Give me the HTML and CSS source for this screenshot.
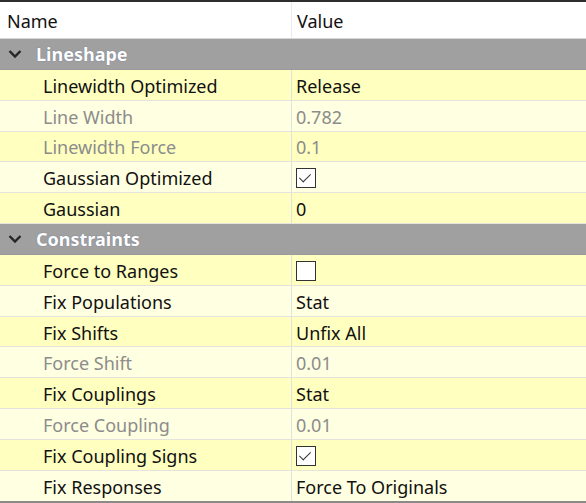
FILE: index.html
```html
<!DOCTYPE html>
<html lang="en">
<head>
  <meta charset="UTF-8">
  <title>Properties</title>
  <link rel="stylesheet" href="styles.css">
</head>
<body>

  <div class="grid">
    <!-- Column headers -->
    <div class="row header">
      <div class="cell name">Name</div>
      <div class="cell value">Value</div>
    </div>

    <!-- Lineshape -->
    <div class="row group">
      <span class="chev"><svg width="14" height="10" viewBox="0 0 14 10"><path d="M1.5 2 L7 7.5 L12.5 2" fill="none" stroke="#262626" stroke-width="2.4"/></svg></span>
      <span>Lineshape</span>
    </div>
    <div class="row dark">
      <div class="cell name">Linewidth Optimized</div>
      <div class="cell value">Release</div>
    </div>
    <div class="row light off">
      <div class="cell name">Line Width</div>
      <div class="cell value">0.782</div>
    </div>
    <div class="row dark off">
      <div class="cell name">Linewidth Force</div>
      <div class="cell value">0.1</div>
    </div>
    <div class="row light">
      <div class="cell name">Gaussian Optimized</div>
      <div class="cell value"><span class="check on"></span></div>
    </div>
    <div class="row dark">
      <div class="cell name">Gaussian</div>
      <div class="cell value">0</div>
    </div>

    <!-- Constraints -->
    <div class="row group">
      <span class="chev"><svg width="14" height="10" viewBox="0 0 14 10"><path d="M1.5 2 L7 7.5 L12.5 2" fill="none" stroke="#262626" stroke-width="2.4"/></svg></span>
      <span>Constraints</span>
    </div>
    <div class="row dark">
      <div class="cell name">Force to Ranges</div>
      <div class="cell value"><span class="check"></span></div>
    </div>
    <div class="row light">
      <div class="cell name">Fix Populations</div>
      <div class="cell value">Stat</div>
    </div>
    <div class="row dark">
      <div class="cell name">Fix Shifts</div>
      <div class="cell value">Unfix All</div>
    </div>
    <div class="row light off">
      <div class="cell name">Force Shift</div>
      <div class="cell value">0.01</div>
    </div>
    <div class="row dark">
      <div class="cell name">Fix Couplings</div>
      <div class="cell value">Stat</div>
    </div>
    <div class="row light off">
      <div class="cell name">Force Coupling</div>
      <div class="cell value">0.01</div>
    </div>
    <div class="row dark">
      <div class="cell name">Fix Coupling Signs</div>
      <div class="cell value"><span class="check on"></span></div>
    </div>
    <div class="row light">
      <div class="cell name">Fix Responses</div>
      <div class="cell value">Force To Originals</div>
    </div>
  </div>

</body>
</html>
```

FILE: styles.css
```css
* {
  margin: 0;
  padding: 0;
  box-sizing: border-box;
}

body {
  font-family: "Noto Sans", "Open Sans", sans-serif;
  font-size: 18px;
  color: #111;
  background: #fff;
  width: 586px;
  height: 503px;
  overflow: hidden;
}

.grid {
  border-top: 2px solid #2e2e2e;
  border-bottom: 2px solid #8a8a8a;
  height: 503px;
  display: flex;
  flex-direction: column;
  overflow: hidden;
}

.row {
  display: flex;
  align-items: stretch;
  height: 30.85px;
  flex-shrink: 0;
  border-bottom: 1px solid #e4e4dc;
}

.cell {
  display: flex;
  align-items: center;
  padding-top: 2px;
}

.cell.name {
  width: 292px;
  padding-left: 43px;
  border-right: 1px solid #e2e2dc;
}

.cell.value {
  flex: 1;
  padding-left: 4px;
}

.header {
  height: 37px;
  background: #fff;
  border-bottom: 1px solid #d6d6d6;
}

.header .cell.name {
  padding-left: 7px;
  border-right: 1px solid #ececec;
}

.header .cell.value {
  padding-left: 5px;
}

.group {
  background: #a0a0a0;
  color: #fff;
  font-weight: bold;
  align-items: center;
  padding-top: 1px;
  border-bottom: 1px solid #9a9a9a;
  text-shadow: 0 0 1px rgba(40, 60, 120, 0.6);
}

.group .chev {
  width: 36px;
  padding-left: 8px;
  display: flex;
  align-items: center;
}

.dark {
  background: #ffffc0;
}

.light {
  background: #ffffe1;
}

.off {
  color: #8c8c8c;
}

.check {
  display: inline-block;
  width: 20px;
  height: 20px;
  border: 1.5px solid #333;
  background: #fff;
  position: relative;
}

.check.on::after {
  content: "";
  position: absolute;
  left: 5px;
  top: 2px;
  width: 5px;
  height: 10px;
  border-right: 1.5px solid #333;
  border-bottom: 1.5px solid #333;
  transform: rotate(45deg);
}
```
